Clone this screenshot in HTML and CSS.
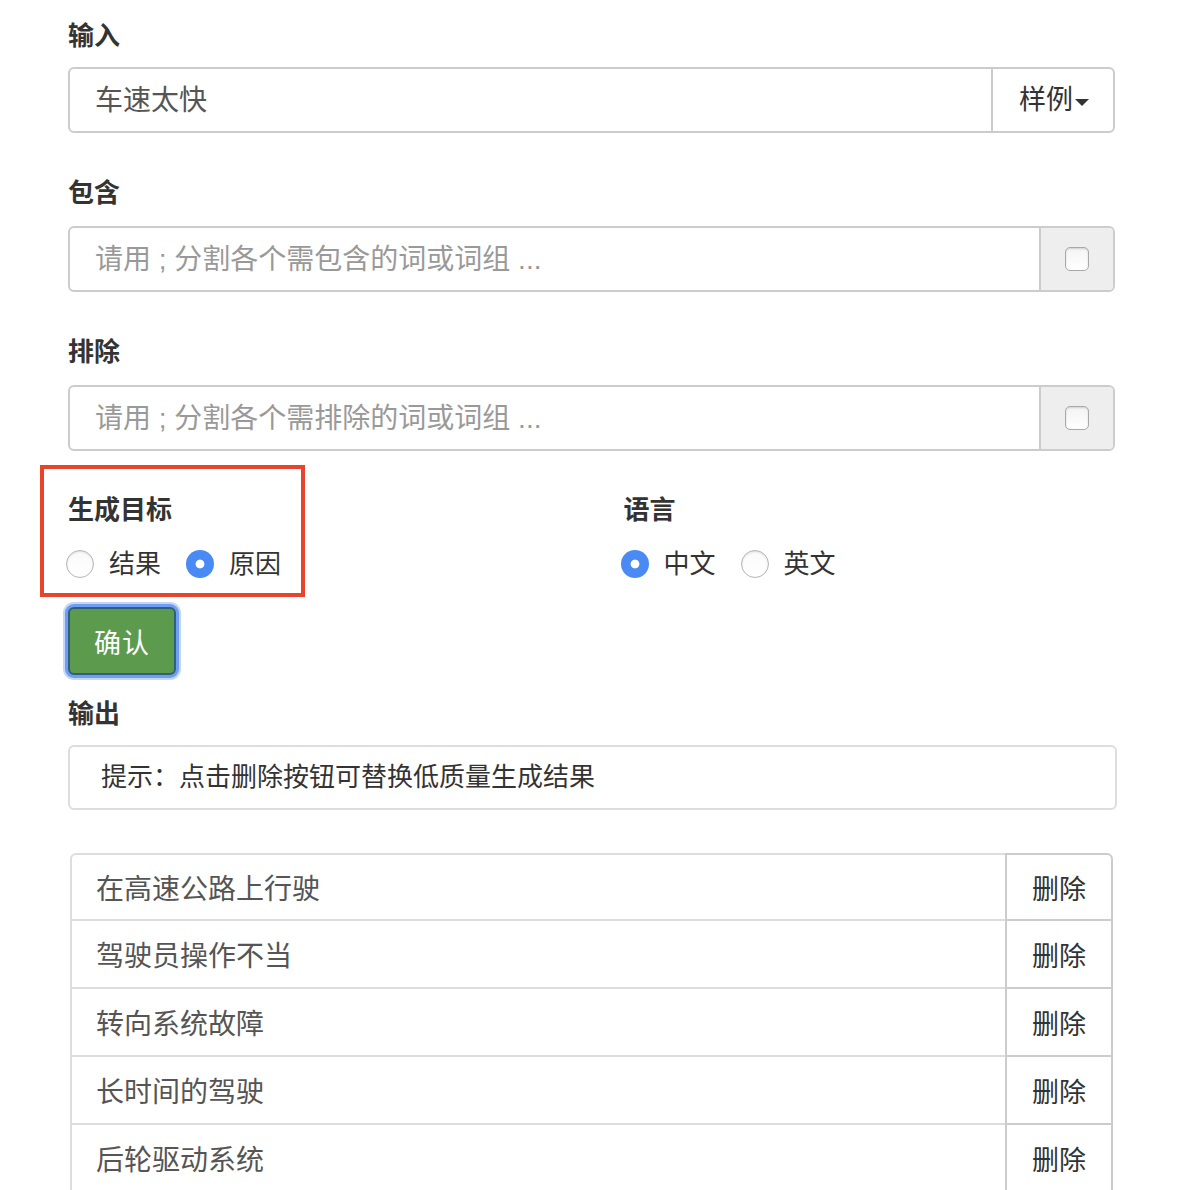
FILE: index.html
```html
<!DOCTYPE html>
<html lang="zh">
<head>
<meta charset="utf-8">
<title>生成</title>
<link rel="stylesheet" href="styles.css">
</head>
<body>
<div class="container">
  <div class="group first">
    <div class="label">输入</div>
    <div class="input-group">
      <div class="field">车速太快</div>
      <div class="btn-addon">样例<span class="caret"></span></div>
    </div>
  </div>
  <div class="group">
    <div class="label">包含</div>
    <div class="input-group">
      <div class="field placeholder">请用 ; 分割各个需包含的词或词组 ...</div>
      <div class="addon"><span class="checkbox"></span></div>
    </div>
  </div>
  <div class="group">
    <div class="label">排除</div>
    <div class="input-group">
      <div class="field placeholder">请用 ; 分割各个需排除的词或词组 ...</div>
      <div class="addon"><span class="checkbox"></span></div>
    </div>
  </div>

  <div class="row">
    <div class="col">
      <div class="highlight"></div>
      <div class="label">生成目标</div>
      <div class="radios">
        <span class="radio"></span><span class="radio-text">结果</span>
        <span class="radio checked"></span><span class="radio-text">原因</span>
      </div>
    </div>
    <div class="col">
      <div class="label lang">语言</div>
      <div class="radios right">
        <span class="radio checked"></span><span class="radio-text">中文</span>
        <span class="radio"></span><span class="radio-text">英文</span>
      </div>
    </div>
  </div>

  <div class="pad">
    <button class="confirm">确认</button>
    <div class="label out">输出</div>
    <div class="hint">提示：点击删除按钮可替换低质量生成结果</div>

    <div class="results">
      <div class="res-row"><div class="res-text">在高速公路上行驶</div><div class="res-del">删除</div></div>
      <div class="res-row"><div class="res-text">驾驶员操作不当</div><div class="res-del">删除</div></div>
      <div class="res-row"><div class="res-text">转向系统故障</div><div class="res-del">删除</div></div>
      <div class="res-row"><div class="res-text">长时间的驾驶</div><div class="res-del">删除</div></div>
      <div class="res-row"><div class="res-text">后轮驱动系统</div><div class="res-del">删除</div></div>
    </div>
  </div>
</div>
</body>
</html>
```
FILE: styles.css
```css
* { box-sizing: border-box; }
html, body { margin: 0; padding: 0; background: #fff; }
body {
  font-family: "Liberation Sans", "Noto Sans CJK SC", sans-serif;
  color: #333;
}
.container {
  width: 1103px;
  margin-left: 40px;
  padding-top: 18px;
}
.group { padding: 0 28px; margin-bottom: 42px; }
.label {
  font-size: 26px;
  font-weight: bold;
  line-height: 36px;
  height: 36px;
  margin-bottom: 15px;
  color: #333;
}
.group.first .label { margin-bottom: 13px; }
.input-group {
  display: flex;
  height: 66px;
  border: 2px solid #ccc;
  border-radius: 6px;
  overflow: hidden;
}
.field {
  flex: 1;
  padding-left: 25px;
  padding-top: 1px;
  font-size: 28px;
  line-height: 62px;
  color: #555;
}
.field.placeholder { color: #999; }
.btn-addon {
  width: 122px;
  border-left: 2px solid #ccc;
  font-size: 27px;
  line-height: 62px;
  color: #333;
  display: flex;
  align-items: center;
  justify-content: center;
  padding-left: 2px;
}
.caret {
  width: 0; height: 0;
  border-left: 7px solid transparent;
  border-right: 7px solid transparent;
  border-top: 7px solid #333;
  margin-left: 2px;
  margin-top: 4px;
}
.addon {
  width: 74px;
  border-left: 2px solid #ccc;
  background: #eee;
  display: flex;
  align-items: center;
  justify-content: center;
}
.checkbox {
  width: 24px; height: 24px;
  border: 1px solid #a9a9a9;
  border-radius: 5px;
  background: linear-gradient(#f4f4f4, #fff);
  box-shadow: inset 0 1px 2px rgba(0,0,0,0.15);
}
.row { display: flex; margin-top: -1px; }
.col {
  position: relative;
  width: 50%;
  padding: 0 28px;
}
.row .label { margin-bottom: 16px; }
.lang { padding-left: 4px; }
.highlight {
  position: absolute;
  left: 0;
  top: -27px;
  width: 265px;
  height: 132px;
  border: 4px solid #e8432d;
}
.radios {
  display: flex;
  align-items: center;
  height: 40px;
  margin-left: -2px;
}
.radios.right { margin-left: 1px; }
.radio {
  width: 28px; height: 28px;
  border-radius: 50%;
  border: 1px solid #b5b5b5;
  background: linear-gradient(#fafafa, #fff);
  box-shadow: inset 0 1px 2px rgba(0,0,0,0.12);
  flex: none;
}
.radio.checked {
  border: none;
  background: radial-gradient(circle, #fff 0 4px, #4a8af4 4.8px);
  box-shadow: none;
}
.radio-text {
  font-size: 26px;
  color: #333;
  margin-left: 15px;
  margin-right: 25px;
  line-height: 40px;
}
.pad { padding: 0 28px; }
.confirm {
  display: block;
  margin-top: 23px;
  width: 108px;
  height: 68px;
  background: #5c9b4e;
  color: #fff;
  font-family: "Liberation Sans", "Noto Sans CJK SC", sans-serif;
  font-size: 27px;
  border: 2px solid #2f5f7a;
  border-radius: 6px;
  box-shadow: 0 0 0 3px #6f9df1, 0 0 0 5px #c3d7fa;
  padding: 0;
  letter-spacing: 1px;
}
.out { margin-top: 21px; margin-bottom: 13px; }
.hint {
  height: 65px;
  border: 2px solid #ddd;
  border-radius: 6px;
  padding-left: 31px;
  font-size: 26px;
  line-height: 61px;
  color: #333;
  margin-right: -2px;
}
.results {
  margin-top: 43px;
  margin-left: 2px;
  margin-right: 2px;
}
.res-row { display: flex; height: 68px; }
.res-row + .res-row { margin-top: -2px; height: 70px; }
.res-text {
  flex: 1;
  border: 2px solid #ddd;
  padding-left: 24px;
  font-size: 28px;
  color: #555;
  display: flex;
  align-items: center;
}
.res-del {
  width: 108px;
  margin-left: -2px;
  border: 2px solid #ccc;
  font-size: 27px;
  color: #333;
  display: flex;
  align-items: center;
  justify-content: center;
}
.res-row:first-child .res-text { border-top-left-radius: 6px; }
.res-row:first-child .res-del { border-top-right-radius: 6px; }
```
